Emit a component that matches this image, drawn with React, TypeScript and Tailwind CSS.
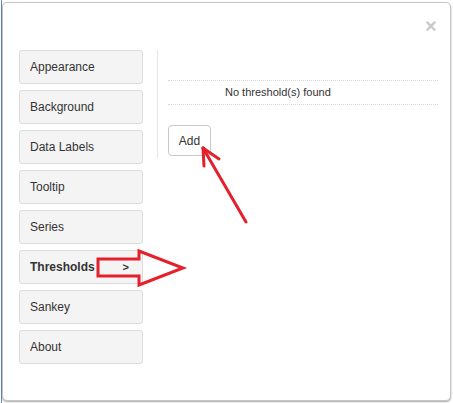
import React from "react";

const items = ["Appearance", "Background", "Data Labels", "Tooltip", "Series", "Thresholds", "Sankey", "About"];

export default function App() {
  return (
    <div
      className="relative w-[453px] h-[403px] bg-white overflow-hidden pl-[1px]"
      style={{ fontFamily: '"Liberation Sans", Arial, sans-serif' }}
    >
      <div className="h-full border-l border-[#6c8cb4] pt-[2px]">
        <div className="relative w-[449px] h-[399px] border border-[#c6c6c6] rounded-[5px] bg-white shadow-[0_1px_2px_rgba(0,0,0,0.35)]">
          <div className="relative h-[47px]">
            <span className="absolute left-[422px] top-[13px] text-[20px] font-bold leading-none text-[#c9c9c9]">×</span>
          </div>
          <div className="flex">
            <div className="flex flex-col gap-[6px] pl-[16px] pr-[14px]">
              {items.map((it) => (
                <div
                  key={it}
                  className={`flex items-center justify-between w-[124px] h-[34px] pl-[10px] pr-[13px] bg-[#f4f4f4] border border-[#dcdcdc] rounded-[3px] text-[12px] text-[#333] ${
                    it === "Thresholds" ? "font-bold text-[#111]" : ""
                  }`}
                >
                  <span>{it}</span>
                  {it === "Thresholds" && <span className="text-[11px]">&gt;</span>}
                </div>
              ))}
            </div>
            <div className="self-start flex-1 border-l border-[#e6e6e6] pl-[10px] pr-[12px] pt-[30px] pb-[2px]">
              <div className="border-t border-b border-dotted border-[#d8d8d8] h-[25px] flex items-center pl-[57px] text-[11px] text-[#333]">
                No threshold(s) found
              </div>
              <button className="mt-[20px] w-[43px] h-[31px] border border-[#c8c8c8] rounded-[4px] bg-white text-[12px] text-[#333]">
                Add
              </button>
            </div>
          </div>
        </div>
      </div>
      <svg className="absolute left-0 top-0 pointer-events-none" width="453" height="403">
        <g stroke="#e3202b" strokeWidth="3" fill="none" strokeLinecap="round" strokeLinejoin="miter">
          <line x1="246" y1="222" x2="203" y2="148" />
          <line x1="203" y1="148" x2="219" y2="159" />
          <line x1="203" y1="148" x2="204" y2="166" />
          <polygon points="98,259 139,259 139,251 183,268 139,285 139,276 98,276" />
        </g>
      </svg>
    </div>
  );
}
